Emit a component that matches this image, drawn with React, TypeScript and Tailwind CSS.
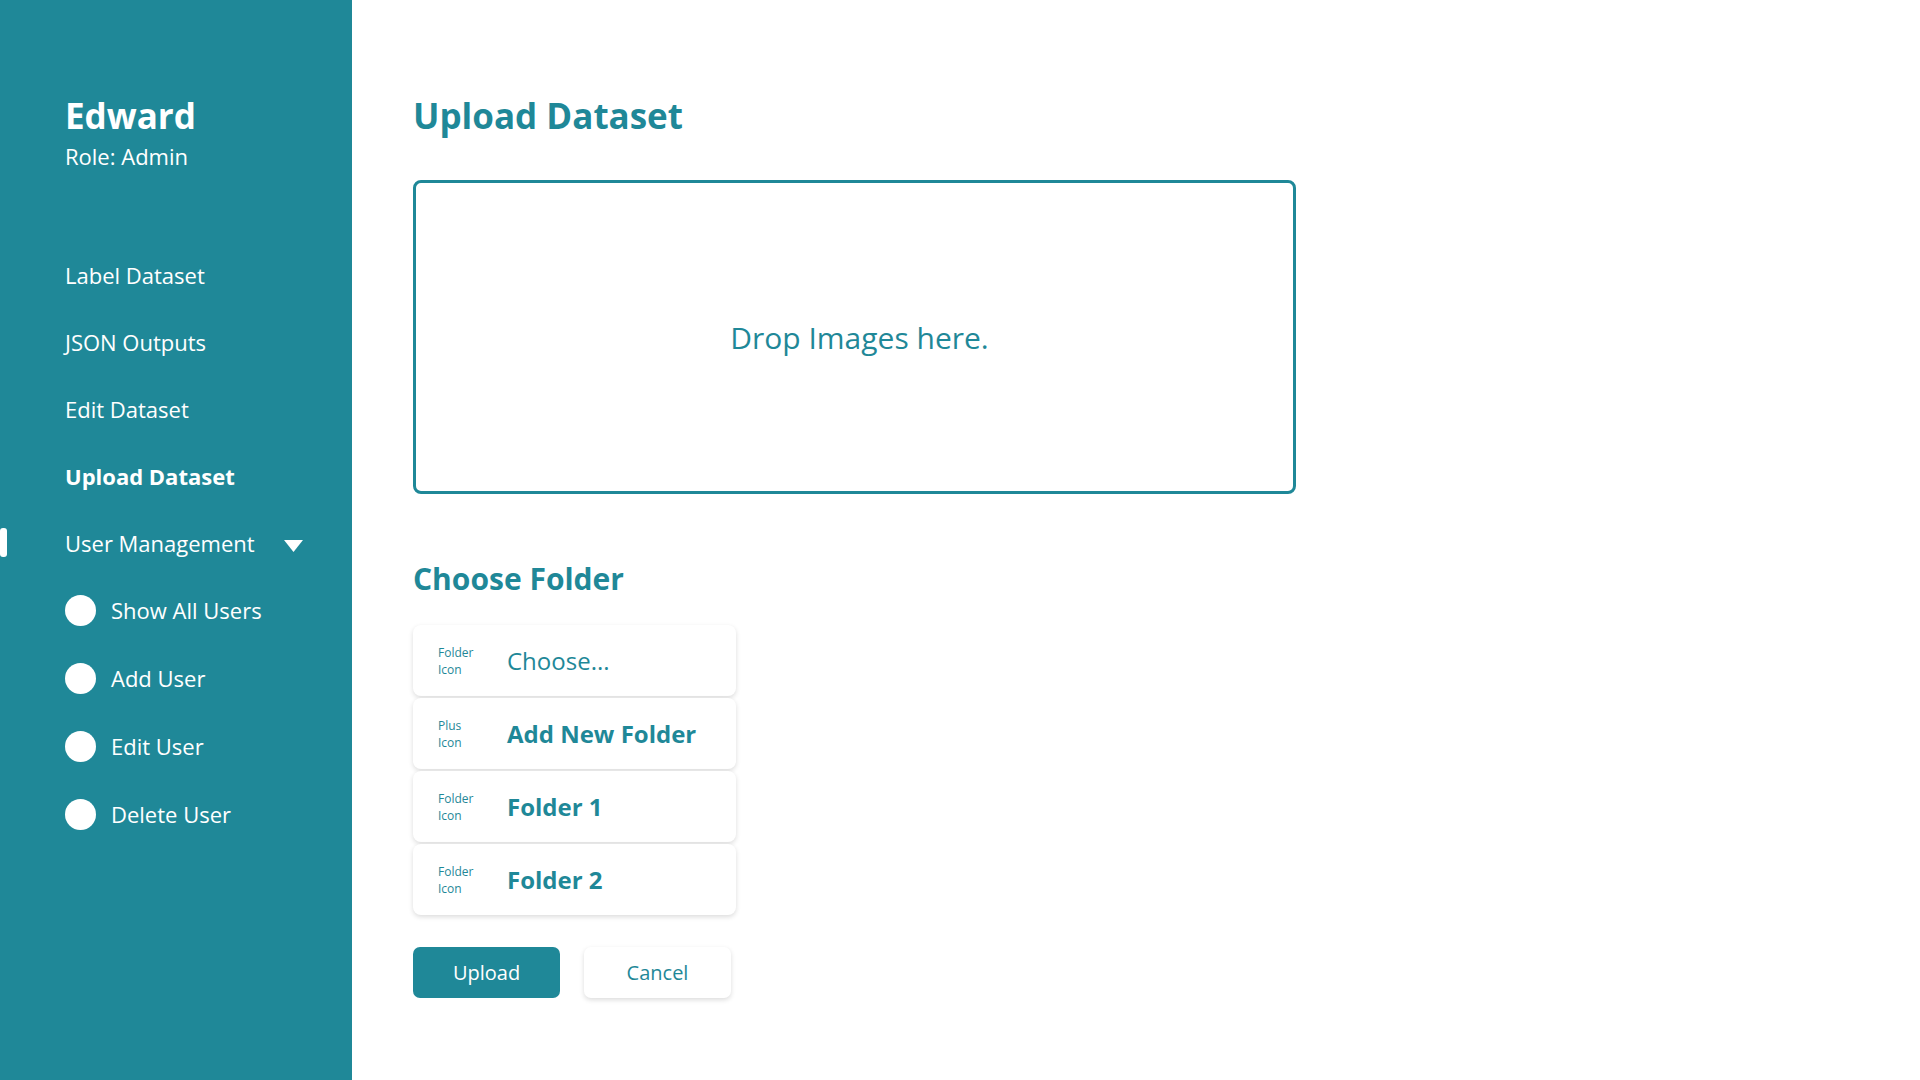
import React from 'react';

const navItems = ['Label Dataset', 'JSON Outputs', 'Edit Dataset'];
const subItems = ['Show All Users', 'Add User', 'Edit User', 'Delete User'];

const folders = [
    { icon: ['Folder', 'Icon'], label: 'Choose...', bold: false },
    { icon: ['Plus', 'Icon'], label: 'Add New Folder', bold: true },
    { icon: ['Folder', 'Icon'], label: 'Folder 1', bold: true },
    { icon: ['Folder', 'Icon'], label: 'Folder 2', bold: true },
];

function Sidebar() {
    return (
        <aside className="w-[352px] shrink-0 min-h-screen bg-[#1f8898] text-white pl-[65px] pt-[95px]">
            {/* Usuário */}
            <div className="text-[35px] leading-[42px] font-bold">Edward</div>
            <div className="mt-[4px] text-[22px] leading-[30px]">Role: Admin</div>

            {/* Navegação */}
            <nav className="mt-[89px] flex flex-col gap-[37px] text-[22px]">
                {navItems.map((item) => (
                    <div key={item} className="h-[30px] leading-[30px]">{item}</div>
                ))}
                <div className="h-[30px] leading-[30px] font-bold">Upload Dataset</div>
                <div className="relative h-[30px] leading-[30px] flex items-center">
                    <span className="absolute left-[-65px] top-0 w-[7px] h-[29px] rounded-[3px] bg-white" />
                    <span>User Management</span>
                    <svg className="ml-[29px] mt-[6px]" width="19" height="12" viewBox="0 0 19 12">
                        <polygon points="0,0 19,0 9.5,12" fill="white" />
                    </svg>
                </div>
                {subItems.map((item) => (
                    <div key={item} className="h-[31px] flex items-center gap-[15px]">
                        <span className="w-[31px] h-[31px] rounded-full bg-white shrink-0" />
                        <span className="leading-[30px] -mt-[2px]">{item}</span>
                    </div>
                ))}
            </nav>
        </aside>
    );
}

function FolderCard({ icon, label, bold }: { icon: string[]; label: string; bold: boolean }) {
    return (
        <div className="h-[71px] w-[323px] bg-white rounded-[8px] shadow-[0_2px_5px_rgba(0,0,0,0.14)] flex items-center pl-[25px]">
            <div className="w-[69px] text-[12px] leading-[17px] text-[#1f8898]">
                <div>{icon[0]}</div>
                <div>{icon[1]}</div>
            </div>
            <span className={`text-[24px] leading-[32px] text-[#1f8898] ${bold ? 'font-bold' : ''}`}>{label}</span>
        </div>
    );
}

export default function App() {
    return (
        <div className="flex min-h-screen bg-white" style={{ fontFamily: '"Open Sans", "Liberation Sans", sans-serif' }}>
            <Sidebar />

            <main className="flex-1 pl-[61px] pt-[95px]">
                <h1 className="text-[35px] leading-[42px] font-bold text-[#1f8898]">Upload Dataset</h1>

                {/* Drop zone */}
                <div className="mt-[43px] w-[883px] h-[314px] border-[3px] border-[#1f8898] rounded-[8px] flex items-center justify-center">
                    <span className="text-[30px] leading-[40px] text-[#1f8898] ml-[10px] mt-[2px]">Drop Images here.</span>
                </div>

                <h2 className="mt-[65px] text-[30px] leading-[40px] font-bold text-[#1f8898]">Choose Folder</h2>

                <div className="mt-[26px] flex flex-col gap-[2px]">
                    {folders.map((f, i) => (
                        <FolderCard key={i} icon={f.icon} label={f.label} bold={f.bold} />
                    ))}
                </div>

                {/* Ações */}
                <div className="mt-[32px] flex gap-[24px]">
                    <button className="w-[147px] h-[51px] rounded-[7px] bg-[#1f8898] text-white text-[20px]">Upload</button>
                    <button className="w-[147px] h-[51px] rounded-[7px] bg-white text-[#1f8898] text-[20px] shadow-[0_2px_5px_rgba(0,0,0,0.14)]">Cancel</button>
                </div>
            </main>
        </div>
    );
}
